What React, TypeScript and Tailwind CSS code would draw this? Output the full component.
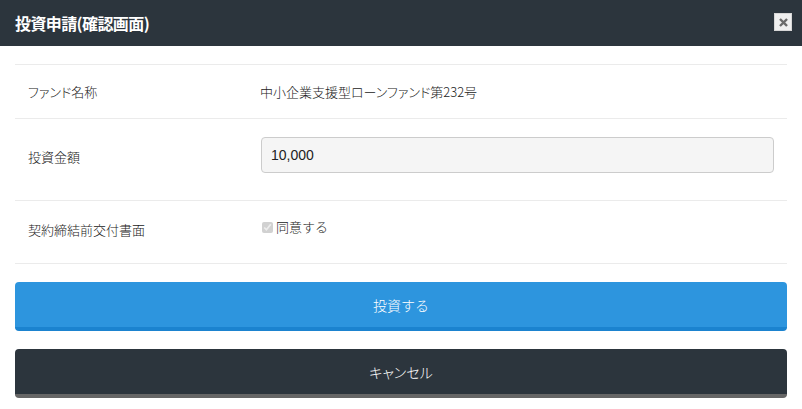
import React from "react";

const jp = { fontFamily: '"Noto Sans CJK JP", "Noto Sans", sans-serif' };
const palt = { fontFeatureSettings: '"palt"' };

export default function App() {
  return (
    <div className="w-[802px] h-[409px] bg-white overflow-hidden" style={jp}>
      <div className="h-[46px] bg-[#2c353d] flex items-center justify-between pl-[15px] pr-[10px]">
        <h1 className="text-white text-[16px] font-bold tracking-[-0.6px]">投資申請(確認画面)</h1>
        <button className="w-[18px] h-[18px] bg-[#efefef] border border-[#d6d6d6] flex items-center justify-center mb-[2px]">
          <svg width="9" height="9" viewBox="0 0 10 10">
            <path d="M2 2 L8 8 M8 2 L2 8" stroke="#6b6b6b" strokeWidth="2.6" strokeLinecap="square" />
          </svg>
        </button>
      </div>
      <div className="px-[15px] pt-[18px]">
        <div className="border-t border-[#ebebeb] text-[13px] text-[#222] font-light">
          <div className="h-[54px] border-b border-[#ebebeb] flex items-center">
            <div className="w-[245px] pl-[13px]" style={palt}>ファンド名称</div>
            <div style={palt}>中小企業支援型ローンファンド第232号</div>
          </div>
          <div className="h-[82px] border-b border-[#ebebeb] flex items-start pt-[18px]">
            <div className="w-[246px] pl-[13px] leading-[40px]">投資金額</div>
            <div className="w-[513px] h-[36px] bg-[#f5f5f5] border border-[#cccccc] rounded-[4px] flex items-center pl-[9px] text-[14px] text-[#222] font-normal" style={{ fontFamily: '"Liberation Sans", Arial, sans-serif' }}>
              10,000
            </div>
          </div>
          <div className="h-[63px] border-b border-[#ebebeb] flex items-start">
            <div className="w-[247px] pl-[13px] pt-[18px] leading-[22px]">契約締結前交付書面</div>
            <label className="flex items-center gap-[3px] pt-[15px] leading-[22px]">
              <input type="checkbox" checked disabled readOnly className="w-[11px] h-[11px] m-0 accent-[#999]" />
              <span>同意する</span>
            </label>
          </div>
        </div>
        <button className="mt-[18px] w-full h-[49px] bg-[#2d95de] border-b-4 border-[#1b83cf] rounded-[4px] text-white text-[14px] font-light flex items-center justify-center pt-[2px]">
          投資する
        </button>
        <button className="mt-[18px] w-full h-[49px] bg-[#2c353d] border-b-4 border-[#666666] rounded-[4px] text-white text-[14px] font-light flex items-center justify-center pt-[2px]" style={palt}>
          キャンセル
        </button>
      </div>
    </div>
  );
}
